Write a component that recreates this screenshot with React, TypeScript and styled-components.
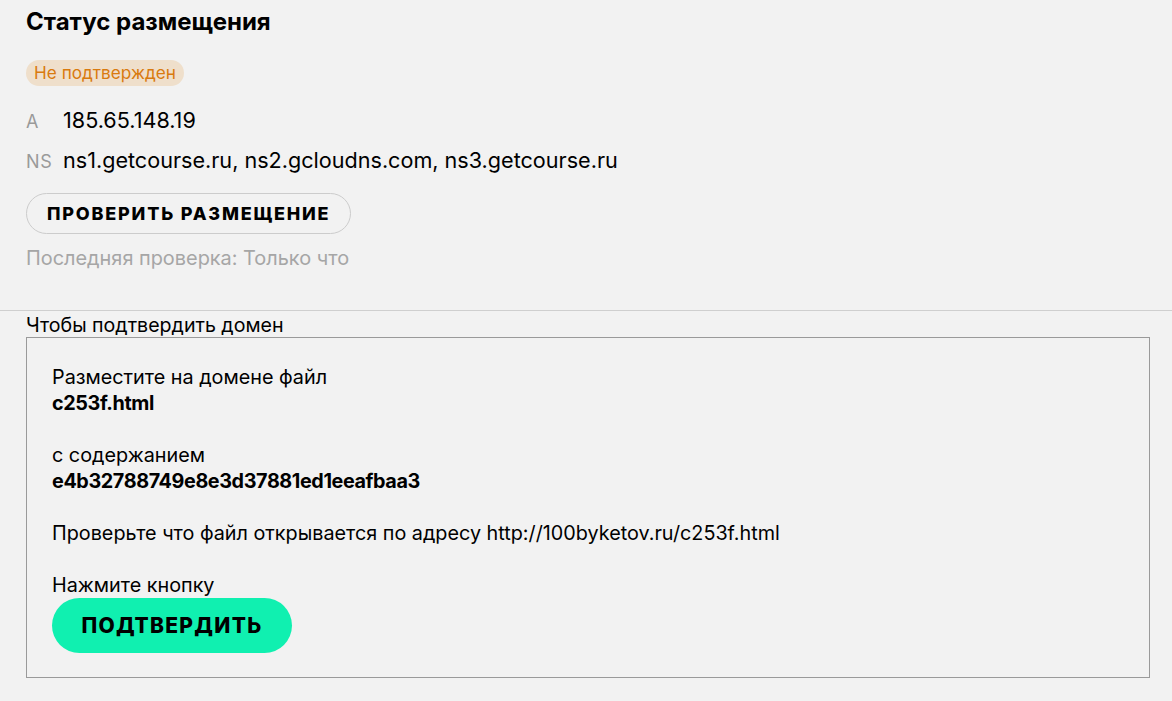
import React from "react";
import styled, { createGlobalStyle } from "styled-components";

const GlobalStyle = createGlobalStyle`
  html, body {
    margin: 0;
    padding: 0;
    background: #f2f2f2;
  }
  body {
    font-family: Inter, "Noto Sans", sans-serif;
    color: #000;
  }
`;

const Page = styled.div`
  width: 1172px;
  min-height: 701px;
  background: #f2f2f2;
`;

const StatusSection = styled.section`
  padding: 8px 26px 0;
  height: 311px;
  border-bottom: 1px solid #cfcfcf;
  box-sizing: border-box;
`;

const Title = styled.h2`
  margin: 0;
  font-size: 24px;
  font-weight: 700;
  line-height: 28px;
`;

const Badge = styled.span`
  display: inline-block;
  margin-top: 24px;
  padding: 0 8px;
  height: 26px;
  line-height: 26px;
  border-radius: 13px;
  background: #efdfcb;
  color: #d97a0f;
  font-size: 17.2px;
`;

const RecordList = styled.div`
  margin-top: 20px;
  display: flex;
  flex-direction: column;
  gap: 10px;
`;

const Record = styled.div`
  display: grid;
  grid-template-columns: 37px 1fr;
  align-items: baseline;
  font-size: 21.6px;
  line-height: 28px;
`;

const RecordType = styled.span`
  font-size: 18px;
  letter-spacing: 0.8px;
  color: #9a9a9a;
`;

const CheckButton = styled.button`
  display: block;
  margin-top: 17px;
  height: 41px;
  padding: 0 20px;
  border: 1px solid #cccccc;
  border-radius: 21px;
  background: transparent;
  font-family: inherit;
  font-size: 18px;
  font-weight: 800;
  letter-spacing: 1.8px;
  color: #000;
`;

const LastCheck = styled.div`
  margin-top: 12px;
  font-size: 19.9px;
  color: #a6a6a6;
`;

const ConfirmSection = styled.section`
  padding: 2px 22px 0 26px;
`;

const ConfirmLabel = styled.div`
  font-size: 19.6px;
  line-height: 24px;
`;

const ConfirmBox = styled.div`
  height: 341px;
  box-sizing: border-box;
  border: 1px solid #9a9a9a;
  padding: 26px 25px;
  font-size: 19.8px;
  line-height: 26px;
`;

const Step = styled.p`
  margin: 0 0 26px;
`;

const Value = styled.span`
  display: block;
  font-weight: 700;
  letter-spacing: -0.4px;
`;

const ConfirmButton = styled.button`
  display: block;
  width: 240px;
  height: 55px;
  border: none;
  border-radius: 28px;
  background: #10f0b0;
  font-family: inherit;
  font-size: 21px;
  font-weight: 800;
  letter-spacing: 1.3px;
  color: #000;
`;

export default function App() {
  return (
    <Page>
      <GlobalStyle />
      <StatusSection>
        <Title>Статус размещения</Title>
        <Badge>Не подтвержден</Badge>
        <RecordList>
          <Record>
            <RecordType>A</RecordType>
            <span>185.65.148.19</span>
          </Record>
          <Record>
            <RecordType>NS</RecordType>
            <span>ns1.getcourse.ru, ns2.gcloudns.com, ns3.getcourse.ru</span>
          </Record>
        </RecordList>
        <CheckButton>ПРОВЕРИТЬ РАЗМЕЩЕНИЕ</CheckButton>
        <LastCheck>Последняя проверка: Только что</LastCheck>
      </StatusSection>
      <ConfirmSection>
        <ConfirmLabel>Чтобы подтвердить домен</ConfirmLabel>
        <ConfirmBox>
          <Step>
            Разместите на домене файл
            <Value>c253f.html</Value>
          </Step>
          <Step>
            с содержанием
            <Value>e4b32788749e8e3d37881ed1eeafbaa3</Value>
          </Step>
          <Step>Проверьте что файл открывается по адресу http://100byketov.ru/c253f.html</Step>
          <div>Нажмите кнопку</div>
          <ConfirmButton>ПОДТВЕРДИТЬ</ConfirmButton>
        </ConfirmBox>
      </ConfirmSection>
    </Page>
  );
}
